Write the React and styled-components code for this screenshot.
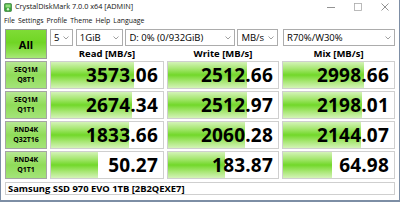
import React from "react";
import styled, { createGlobalStyle } from "styled-components";

const GlobalStyle = createGlobalStyle`
  html, body { margin: 0; padding: 0; background: #ffffff; }
  * { box-sizing: border-box; }
`;

const FONT = `"Open Sans", "Noto Sans", "DejaVu Sans", sans-serif`;

const Window = styled.div`
  width: 400px;
  height: 202px;
  background: #ffffff;
  border-left: 1px solid #7d8ea5;
  border-right: 1px solid #7d8ea5;
  border-bottom: 2px solid #7d8ea5;
  font-family: ${FONT};
  color: #000;
  display: flex;
  flex-direction: column;
  overflow: hidden;
`;

const TitleBar = styled.div`
  height: 14px;
  display: flex;
  align-items: center;
  padding-left: 3px;
  font-size: 7.3px;
  color: #111;
`;

const TitleText = styled.span`
  margin-left: 3px;
  line-height: 1;
`;

const WinControls = styled.div`
  margin-left: auto;
  display: flex;
  align-items: center;
  gap: 19px;
  padding-right: 10px;
  color: #777;
`;

const MenuBar = styled.div`
  height: 13px;
  display: flex;
  align-items: center;
  gap: 3px;
  padding-left: 3px;
  font-size: 6.9px;
  color: #111;
`;

const Grid = styled.div`
  margin-top: 2px;
  padding: 0 4px 0 4px;
  display: grid;
  grid-template-columns: 42px 114px 112px 113px;
  grid-template-rows: 17px 11px 28px 28px 28px 28px;
  column-gap: 3px;
  row-gap: 2px;
`;

const AllButton = styled.div`
  grid-row: 1 / span 2;
  grid-column: 1;
  border: 1px solid #9a9a9a;
  background: linear-gradient(to bottom, #7fdc36 0%, #70d524 45%, #8fe052 80%, #a8e87a 100%);
  display: flex;
  align-items: center;
  justify-content: center;
  font-weight: 700;
  font-size: 11px;
`;

const Controls = styled.div`
  grid-row: 1;
  grid-column: 2 / span 3;
  display: flex;
  gap: 2px;
`;

const Select = styled.div`
  width: ${(p) => p.$w}px;
  height: 17px;
  border: 1px solid #acacac;
  background: #fff;
  display: flex;
  align-items: center;
  padding: 0 3px 0 3px;
  font-size: 9.5px;
  margin-right: ${(p) => p.$mr || 0}px;
`;

const SelectText = styled.span`
  flex: 1;
  white-space: nowrap;
  overflow: hidden;
`;

const Header = styled.div`
  grid-row: 2;
  grid-column: ${(p) => p.$col};
  font-weight: 700;
  font-size: 9.5px;
  text-align: center;
  line-height: 11px;
`;

const Label = styled.div`
  border: 1px solid #a5a5a5;
  background: linear-gradient(to bottom, #b6e892 0%, #8fdc58 50%, #a4e47a 100%);
  display: flex;
  flex-direction: column;
  align-items: center;
  justify-content: center;
  font-weight: 700;
  font-size: 7px;
  line-height: 10px;
`;

const Cell = styled.div`
  position: relative;
  border: 1px solid #cfcfcf;
  background: #ffffff;
  display: flex;
  align-items: center;
  justify-content: flex-end;
  padding-right: 5px;
  overflow: hidden;
`;

const Bar = styled.div`
  position: absolute;
  left: 0;
  top: 0;
  bottom: 0;
  background: linear-gradient(
    to bottom,
    #d4f3b8 0%,
    #a8e774 25%,
    #72d82a 50%,
    #a8e774 75%,
    #d4f3b8 100%
  );
`;

const Value = styled.span`
  position: relative;
  font-weight: 700;
  font-size: 19px;
  letter-spacing: 0.2px;
  line-height: 1;
`;

const Footer = styled.div`
  margin: 3px 4px 0 4px;
  height: 13px;
  border: 1px solid #cfcfcf;
  background: #fff;
  display: flex;
  align-items: center;
  padding-left: 2px;
  font-weight: 700;
  font-size: 9.4px;
`;

const Chevron = () => (
  <svg width="6" height="4" viewBox="0 0 6 4">
    <path d="M0.5 0.5 L3 3 L5.5 0.5" fill="none" stroke="#888" strokeWidth="0.8" />
  </svg>
);

const AppIcon = () => (
  <svg width="8" height="9" viewBox="0 0 8 9">
    <rect x="0.5" y="0.5" width="7" height="8" rx="1" fill="#3ca33c" stroke="#2b6e2b" strokeWidth="0.6" />
    <rect x="1.5" y="1.5" width="5" height="3" fill="#8fe07a" />
    <circle cx="4" cy="6.3" r="1.2" fill="#d8f4d0" />
  </svg>
);

const rows = [
  { l1: "SEQ1M", l2: "Q8T1", v: [3573.06, 2512.66, 2998.66] },
  { l1: "SEQ1M", l2: "Q1T1", v: [2674.34, 2512.97, 2198.01] },
  { l1: "RND4K", l2: "Q32T16", v: [1833.66, 2060.28, 2144.07] },
  { l1: "RND4K", l2: "Q1T1", v: [50.27, 183.87, 64.98] },
];

const frac = (v) => Math.max(0, Math.min(1, 0.176 * Math.log10(v) + 0.12));

export default function App() {
  return (
    <>
      <GlobalStyle />
      <Window>
        <TitleBar>
          <AppIcon />
          <TitleText>CrystalDiskMark 7.0.0 x64 [ADMIN]</TitleText>
          <WinControls>
            <svg width="8" height="8" viewBox="0 0 8 8">
              <line x1="0" y1="4.5" x2="8" y2="4.5" stroke="#777" strokeWidth="0.8" />
            </svg>
            <svg width="8" height="8" viewBox="0 0 8 8">
              <rect x="0.5" y="0.5" width="7" height="7" fill="none" stroke="#aaa" strokeWidth="0.8" />
            </svg>
            <svg width="8" height="8" viewBox="0 0 8 8">
              <path d="M0.5 0.5 L7.5 7.5 M7.5 0.5 L0.5 7.5" stroke="#777" strokeWidth="0.8" />
            </svg>
          </WinControls>
        </TitleBar>
        <MenuBar>
          <span>File</span>
          <span>Settings</span>
          <span>Profile</span>
          <span>Theme</span>
          <span>Help</span>
          <span>Language</span>
        </MenuBar>
        <Grid>
          <AllButton>All</AllButton>
          <Controls>
            <Select $w={23} $mr={1}>
              <SelectText>5</SelectText>
              <Chevron />
            </Select>
            <Select $w={48}>
              <SelectText>1GiB</SelectText>
              <Chevron />
            </Select>
            <Select $w={111}>
              <SelectText>D: 0% (0/932GiB)</SelectText>
              <Chevron />
            </Select>
            <Select $w={41} $mr={3}>
              <SelectText>MB/s</SelectText>
              <Chevron />
            </Select>
            <Select $w={113}>
              <SelectText>R70%/W30%</SelectText>
              <Chevron />
            </Select>
          </Controls>
          <Header $col={2}>Read [MB/s]</Header>
          <Header $col={3}>Write [MB/s]</Header>
          <Header $col={4}>Mix [MB/s]</Header>
          {rows.map((r, i) => (
            <React.Fragment key={i}>
              <Label>
                <span>{r.l1}</span>
                <span>{r.l2}</span>
              </Label>
              {r.v.map((v, j) => (
                <Cell key={j}>
                  <Bar style={{ width: `${frac(v) * 100}%` }} />
                  <Value>{v.toFixed(2)}</Value>
                </Cell>
              ))}
            </React.Fragment>
          ))}
        </Grid>
        <Footer>Samsung SSD 970 EVO 1TB [2B2QEXE7]</Footer>
      </Window>
    </>
  );
}
